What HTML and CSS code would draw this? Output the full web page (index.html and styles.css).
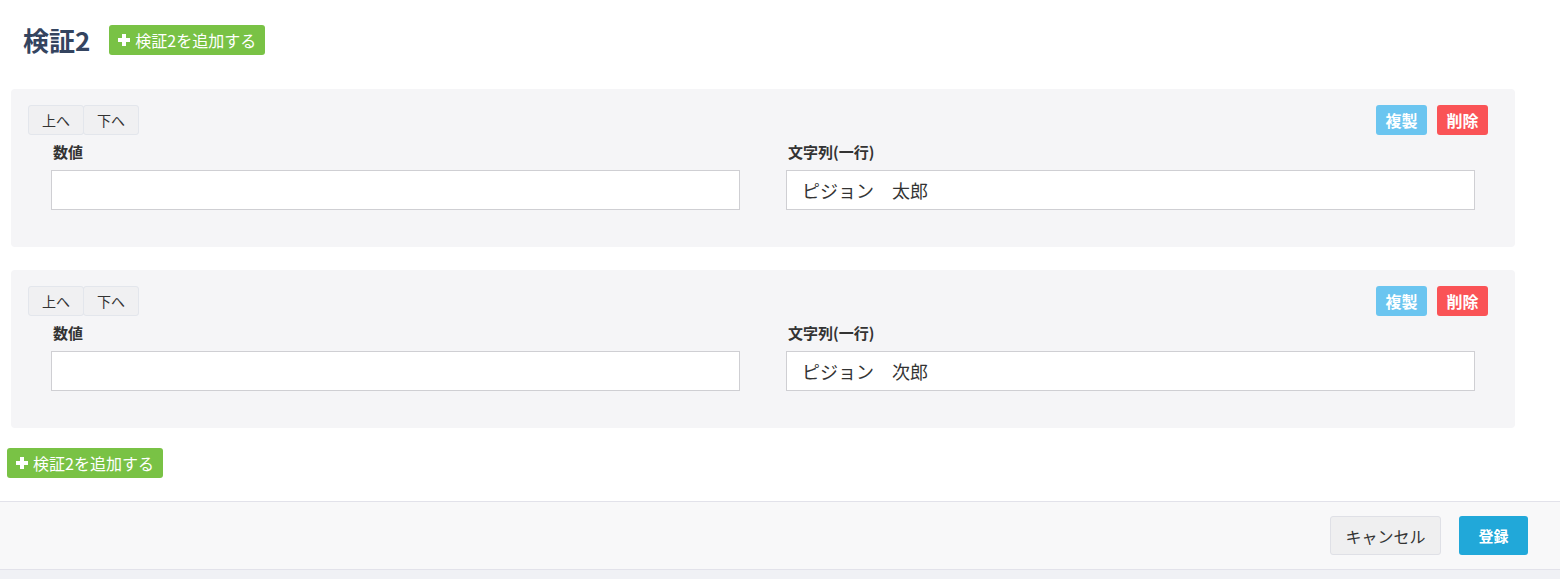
FILE: index.html
```html
<!DOCTYPE html>
<html lang="ja">
<head>
<meta charset="utf-8">
<link rel="stylesheet" href="styles.css">
</head>
<body>
<div class="page">
  <div class="header">
    <h1 class="title">検証2</h1>
    <button class="btn-add"><span class="plus"></span>検証2を追加する</button>
  </div>

  <div class="cards">
    <div class="card">
      <div class="toolbar">
        <div class="move">
          <button class="btn-move">上へ</button><button class="btn-move">下へ</button>
        </div>
        <div class="actions">
          <button class="btn-copy">複製</button>
          <button class="btn-del">削除</button>
        </div>
      </div>
      <div class="fields">
        <div class="field">
          <label class="label">数値</label>
          <div class="input"></div>
        </div>
        <div class="field">
          <label class="label">文字列(一行)</label>
          <div class="input">ピジョン　太郎</div>
        </div>
      </div>
    </div>

    <div class="card">
      <div class="toolbar">
        <div class="move">
          <button class="btn-move">上へ</button><button class="btn-move">下へ</button>
        </div>
        <div class="actions">
          <button class="btn-copy">複製</button>
          <button class="btn-del">削除</button>
        </div>
      </div>
      <div class="fields">
        <div class="field">
          <label class="label">数値</label>
          <div class="input"></div>
        </div>
        <div class="field">
          <label class="label">文字列(一行)</label>
          <div class="input">ピジョン　次郎</div>
        </div>
      </div>
    </div>
  </div>

  <div class="bottom-add">
    <button class="btn-add"><span class="plus"></span>検証2を追加する</button>
  </div>

  <div class="footer">
    <button class="btn-cancel">キャンセル</button>
    <button class="btn-submit">登録</button>
  </div>
</div>
</body>
</html>
```

FILE: styles.css
```css
* { box-sizing: border-box; }
html, body {
  margin: 0;
  padding: 0;
  background: #f0f1f5;
  font-family: "Noto Sans CJK JP", "Noto Sans", sans-serif;
  color: #333;
}
button {
  font-family: inherit;
  cursor: pointer;
}
.page {
  background: #fff;
}
.header {
  display: flex;
  align-items: flex-start;
  gap: 19px;
  padding: 23px 0 0 23px;
  height: 89px;
}
.title {
  margin: 0;
  font-size: 26px;
  font-weight: 700;
  color: #34445f;
  line-height: 34px;
}
.btn-add {
  display: inline-flex;
  align-items: center;
  gap: 5px;
  height: 30px;
  padding: 0 9px 0 9px;
  border: none;
  border-radius: 3px;
  background: #79c245;
  color: #fff;
  font-size: 16px;
  line-height: 30px;
  margin-top: 2px;
}
.plus {
  position: relative;
  width: 12px;
  height: 12px;
  display: inline-block;
}
.plus::before, .plus::after {
  content: "";
  position: absolute;
  background: #fff;
}
.plus::before { left: 4px; top: 0; width: 4px; height: 12px; }
.plus::after { left: 0; top: 4px; width: 12px; height: 4px; }

.cards {
  display: flex;
  flex-direction: column;
  gap: 23px;
  padding: 0 45px 0 11px;
}
.card {
  background: #f5f5f7;
  border-radius: 4px;
  padding: 16px 27px 38px 17px;
  height: 158px;
}
.toolbar {
  display: flex;
  justify-content: space-between;
  height: 30px;
}
.move { display: flex; }
.btn-move {
  width: 56px;
  height: 30px;
  background: #f0f0f2;
  border: 1px solid #e3e6ec;
  border-radius: 3px;
  font-size: 14px;
  color: #333;
  padding: 0;
}
.btn-move + .btn-move { width: 56px; margin-left: -1px; }
.actions { display: flex; gap: 10px; }
.btn-copy, .btn-del {
  width: 51px;
  height: 30px;
  border: none;
  border-radius: 3px;
  color: #fff;
  font-size: 16px;
  font-weight: 700;
  padding: 0;
}
.btn-copy { background: #6bc5f0; }
.btn-del { background: #fa5356; }

.fields {
  display: grid;
  grid-template-columns: 1fr 1fr;
  column-gap: 46px;
  padding: 0 13px 0 23px;
}
.field { display: flex; flex-direction: column; }
.label {
  font-size: 15px;
  font-weight: 700;
  line-height: 20px;
  margin: 7px 0 8px 2px;
  color: #333;
}
.input {
  height: 40px;
  background: #fff;
  border: 1px solid #cfcfd3;
  font-size: 18px;
  line-height: 38px;
  padding: 0 15px;
  color: #333;
}

.bottom-add {
  padding: 20px 0 21px 7px;
  height: 73px;
}
.bottom-add .btn-add { margin-top: 0; }

.footer {
  display: flex;
  justify-content: flex-end;
  align-items: center;
  gap: 18px;
  height: 69px;
  padding: 0 32px 0 0;
  background: #f8f8f9;
  border-top: 1px solid #e2e2ea;
  border-bottom: 1px solid #e2e2ea;
}
.btn-cancel {
  width: 111px;
  height: 39px;
  background: #efeff0;
  border: 1px solid #dfe0e6;
  border-radius: 3px;
  font-size: 16px;
  color: #333;
  padding: 0;
}
.btn-submit {
  width: 69px;
  height: 39px;
  background: #21a8d9;
  border: none;
  border-radius: 3px;
  font-size: 15px;
  font-weight: 700;
  color: #fff;
  padding: 0;
}
```
